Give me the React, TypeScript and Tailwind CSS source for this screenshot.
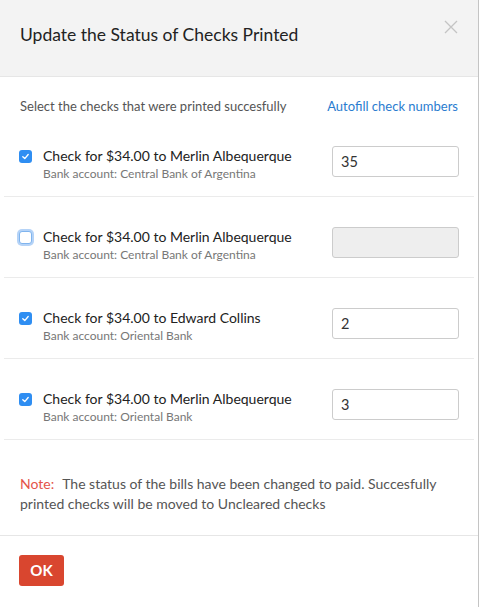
import React from 'react';

const CHECKS = [
  { payee: 'Merlin Albequerque', bank: 'Central Bank of Argentina', checked: true, number: '35' },
  { payee: 'Merlin Albequerque', bank: 'Central Bank of Argentina', checked: false, number: '' },
  { payee: 'Edward Collins', bank: 'Oriental Bank', checked: true, number: '2' },
  { payee: 'Merlin Albequerque', bank: 'Oriental Bank', checked: true, number: '3' },
];

const Box = ({ checked }: { checked: boolean }) =>
  checked ? (
    <span className="flex w-[13px] h-[13px] items-center justify-center rounded-[3px] bg-[#2f8ef2]">
      <svg width="9" height="9" viewBox="0 0 10 10" fill="none">
        <path d="M2 5.2 L4.2 7.3 L8 2.8" stroke="white" strokeWidth="1.5" strokeLinecap="round" strokeLinejoin="round" />
      </svg>
    </span>
  ) : (
    <span className="block w-[13px] h-[13px] rounded-[3px] border border-[#7fb4ee] bg-white shadow-[0_0_0_2px_rgba(120,175,240,0.55)]" />
  );

export default function App() {
  return (
    <div className="w-[479px] h-[607px] bg-white border-r border-[#c4c4c4] font-['Lato',sans-serif] text-[#222]">
      {/* Header */}
      <div className="flex h-[77px] items-start justify-between bg-[#f3f3f3] border-b border-[#e6e6e6] pl-5 pr-[20px]">
        <h1 className="pt-[24px] text-[17.5px] leading-[22px] text-[#222]">Update the Status of Checks Printed</h1>
        <button className="mt-[20px] text-[#c4c4c4]">
          <svg width="14" height="14" viewBox="0 0 14 14" stroke="currentColor" strokeWidth="1.3">
            <path d="M1 1 L13 13 M13 1 L1 13" />
          </svg>
        </button>
      </div>

      {/* Body */}
      <div className="pt-[20px]">
        <div className="flex items-center justify-between px-5 text-[13px] leading-[18px]">
          <span className="text-[#555]">Select the checks that were printed succesfully</span>
          <a className="text-[#2a7ccf]">Autofill check numbers</a>
        </div>

        <div className="mt-[11px] mx-1">
          {CHECKS.map((c, i) => (
            <div
              key={i}
              className={`flex items-start justify-between pr-[15px] pl-[15px] ${i === 0 ? 'pt-[20px]' : 'pt-[30px]'} pb-[19px] border-b border-[#ebebeb]`}
            >
              <div className="flex items-start gap-[11px] -mb-[5px]">
                <div className="pt-[4px]">
                  <Box checked={c.checked} />
                </div>
                <div>
                  <div className="text-[14px] leading-[20px] text-[#222]">
                    Check for $34.00 to {c.payee}
                  </div>
                  <div className="text-[12px] leading-[16px] text-[#777]">Bank account: {c.bank}</div>
                </div>
              </div>
              <div
                className={`flex w-[127px] h-[31px] items-center rounded-[3px] border border-[#ccc] px-[8px] text-[14.5px] text-[#333] ${c.checked ? 'bg-white' : 'bg-[#eee]'}`}
              >
                {c.number}
              </div>
            </div>
          ))}
        </div>

        <p className="px-5 pt-[34px] pb-[21px] text-[14px] leading-[20px] text-[#555]">
          <span className="mr-[8px] text-[#e4544a]">Note:</span>The status of the bills have been changed to paid. Succesfully printed checks will be moved to Uncleared checks
        </p>
      </div>

      {/* Footer */}
      <div className="border-t border-[#e6e6e6] px-[19px] pt-[19px]">
        <button className="h-[31px] w-[45px] rounded-[3px] bg-[#d9462f] text-[15px] font-bold text-white">OK</button>
      </div>
    </div>
  );
}
